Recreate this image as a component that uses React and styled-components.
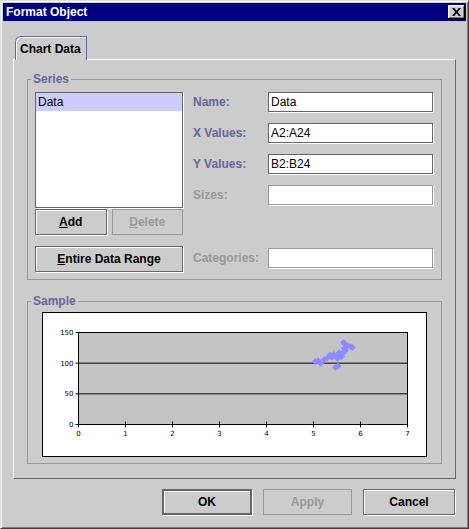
import React from "react";
import styled, { createGlobalStyle } from "styled-components";

const GlobalStyle = createGlobalStyle`
  html, body {
    margin: 0;
    padding: 0;
    background: #cccccc;
  }
  body {
    font-family: "Liberation Sans", Arial, sans-serif;
    font-size: 12px;
  }
  * {
    box-sizing: border-box;
  }
`;

const Window = styled.div`
  width: 469px;
  height: 529px;
  background: #cccccc;
  border: 1px solid;
  border-color: #dddddd #404040 #404040 #dddddd;
  box-shadow: inset 1px 1px #ffffff, inset -1px -1px #808080;
  padding: 2px;
  display: flex;
  flex-direction: column;
`;

const TitleBar = styled.div`
  height: 18px;
  flex: none;
  background: #000080;
  color: #ffffff;
  display: flex;
  align-items: center;
  justify-content: space-between;
  padding: 0 1px 0 3px;
  font-weight: bold;
  font-size: 12px;
`;

const CloseButton = styled.button`
  width: 17px;
  height: 14px;
  padding: 0;
  border: none;
  background: #cccccc;
  box-shadow: inset -1px -1px #000000, inset 1px 1px #ffffff,
    inset -2px -2px #808080, inset 2px 2px #dfdfdf;
  display: flex;
  align-items: center;
  justify-content: center;
`;

const Body = styled.div`
  flex: 1;
  padding: 15px 10px 0 10px;
  display: flex;
  flex-direction: column;
`;

const TabStrip = styled.div`
  display: flex;
  padding-left: 2px;
  height: 24px;
  margin-bottom: -1px;
  position: relative;
  z-index: 1;
`;

const Tab = styled.div`
  height: 24px;
  padding: 0 5px 0 4px;
  border: 1px solid #666699;
  border-bottom: none;
  border-top-left-radius: 6px;
  background: #cccccc;
  box-shadow: inset 1px 1px #ffffff;
  display: flex;
  align-items: center;
  font-weight: bold;
  color: #000000;
`;

const TabPanel = styled.div`
  height: 420px;
  flex: none;
  border: 1px solid;
  border-color: #ffffff #666666 #666666 #ffffff;
  padding: 12px 13px 0 13px;
  display: flex;
  flex-direction: column;
`;

const Group = styled.fieldset`
  margin: ${(p) => (p.$gap ? `${p.$gap}px` : "0")} 0 0 0;
  padding: ${(p) => p.$pad};
  border: 1px solid #999999;
  min-width: 0;
`;

const Legend = styled.legend`
  margin-left: -4px;
  padding: 0 2px;
  height: 14px;
  line-height: 14px;
  font-weight: bold;
  color: #666699;
`;

const SeriesLayout = styled.div`
  display: flex;
  gap: 10px;
`;

const LeftColumn = styled.div`
  width: 148px;
  display: flex;
  flex-direction: column;
`;

const List = styled.div`
  height: 116px;
  background: #ffffff;
  border: 1px solid #666666;
  box-shadow: 1px 1px #ffffff;
`;

const ListItem = styled.div`
  height: 18px;
  line-height: 18px;
  padding-left: 2px;
  background: ${(p) => (p.$selected ? "#ccccff" : "transparent")};
  color: #000000;
`;

const ButtonRow = styled.div`
  display: flex;
  gap: 5px;
  margin-top: 1px;
`;

const Button = styled.button`
  height: 26px;
  width: ${(p) => (p.$width ? `${p.$width}px` : "auto")};
  flex: ${(p) => (p.$grow ? 1 : "none")};
  margin-top: ${(p) => (p.$top ? `${p.$top}px` : "0")};
  padding: 0;
  background: #cccccc;
  font-family: "Liberation Sans", Arial, sans-serif;
  font-size: 12px;
  font-weight: bold;
  color: ${(p) => (p.disabled ? "#999999" : "#000000")};
  border: ${(p) => (p.$default ? "2px" : "1px")} solid
    ${(p) => (p.disabled ? "#999999" : "#666666")};
  box-shadow: ${(p) =>
    p.disabled ? "none" : "inset 1px 1px #ffffff, 1px 1px #ffffff"};
`;

const Mnemonic = styled.span`
  text-decoration: underline;
`;

const FieldColumn = styled.div`
  flex: 1;
  display: flex;
  flex-direction: column;
  gap: 11px;
`;

const FieldRow = styled.div`
  display: flex;
  align-items: center;
  height: 20px;
  margin-top: ${(p) => (p.$push ? "auto" : "0")};
  margin-bottom: ${(p) => (p.$push ? "4px" : "0")};
`;

const Label = styled.label`
  width: 75px;
  font-weight: bold;
  color: ${(p) => (p.$disabled ? "#999999" : "#666699")};
`;

const Field = styled.div`
  width: 165px;
  height: 20px;
  background: #ffffff;
  border: 1px solid ${(p) => (p.$disabled ? "#999999" : "#666666")};
  box-shadow: 1px 1px #ffffff;
  padding-left: 2px;
  line-height: 18px;
  color: #000000;
`;

const ChartBox = styled.div`
  width: 385px;
  height: 145px;
  margin-left: 7px;
  background: #ffffff;
  border: 1px solid #000000;
`;

const ButtonBar = styled.div`
  display: flex;
  justify-content: flex-end;
  gap: 11px;
  margin-top: 10px;
  padding-right: 1px;
`;

const X0 = 35.5;
const X1 = 364.5;
const Y0 = 19.5;
const Y1 = 111.5;
const px = (v) => X0 + (v / 7) * (X1 - X0);
const py = (v) => Y1 - (v / 150) * (Y1 - Y0);

const points = [
  [5.04, 102.7],
  [5.1, 104],
  [5.15, 99.5],
  [5.23, 106],
  [5.3, 109],
  [5.36, 111],
  [5.43, 114],
  [5.4, 110],
  [5.51, 107.6],
  [5.55, 117],
  [5.6, 111],
  [5.5, 113],
  [5.68, 120.6],
  [5.62, 116],
  [5.47, 93],
  [5.52, 95.5],
  [5.64, 133.7],
  [5.68, 130],
  [5.72, 128.8],
  [5.78, 127],
  [5.83, 125.5],
  [5.66, 124],
  [5.35, 113.5],
];

const Chart = () => (
  <svg width="383" height="143" viewBox="0 0 383 143">
    <rect
      x={X0}
      y={Y0}
      width={X1 - X0}
      height={Y1 - Y0}
      fill="#c4c4c4"
      stroke="#000"
    />
    {[50, 100].map((v) => (
      <line key={v} x1={X0} x2={X1} y1={py(v)} y2={py(v)} stroke="#000" />
    ))}
    {[0, 50, 100, 150].map((v) => (
      <g key={v}>
        <line x1={X0 - 3} x2={X0} y1={py(v)} y2={py(v)} stroke="#000" />
        <text
          x={X0 - 5}
          y={py(v) + 2.5}
          textAnchor="end"
          fontSize="7"
          fontFamily="DejaVu Sans, sans-serif"
        >
          {v}
        </text>
      </g>
    ))}
    {[0, 1, 2, 3, 4, 5, 6, 7].map((v) => (
      <g key={v}>
        <line x1={px(v)} x2={px(v)} y1={Y1 - 3} y2={Y1 + 3} stroke="#000" />
        <text
          x={px(v)}
          y={Y1 + 11}
          textAnchor="middle"
          fontSize="7"
          fontFamily="DejaVu Sans, sans-serif"
        >
          {v}
        </text>
      </g>
    ))}
    {points.map(([x, y], i) => {
      const cx = px(x);
      const cy = py(y);
      return (
        <path
          key={i}
          d={`M${cx} ${cy - 3.5}L${cx + 3.5} ${cy}L${cx} ${cy + 3.5}L${cx - 3.5} ${cy}Z`}
          fill="#8c8cff"
        />
      );
    })}
  </svg>
);

const App = () => {
  return (
    <>
      <GlobalStyle />
      <Window>
        <TitleBar>
          <span>Format Object</span>
          <CloseButton aria-label="Close">
            <svg width="9" height="8" viewBox="0 0 9 8">
              <path d="M0 0h2.2l2.3 2.8L6.8 0H9L5.6 4 9 8H6.8L4.5 5.2 2.2 8H0l3.4-4z" fill="#000" />
            </svg>
          </CloseButton>
        </TitleBar>
        <Body>
          <TabStrip>
            <Tab>Chart Data</Tab>
          </TabStrip>
          <TabPanel>
            <Group $pad="6px 8px 7px 7px">
              <Legend>Series</Legend>
              <SeriesLayout>
                <LeftColumn>
                  <List>
                    <ListItem $selected>Data</ListItem>
                  </List>
                  <ButtonRow>
                    <Button $grow>
                      <Mnemonic>A</Mnemonic>dd
                    </Button>
                    <Button $grow disabled>
                      <Mnemonic>D</Mnemonic>elete
                    </Button>
                  </ButtonRow>
                  <Button $top={11}>
                    <Mnemonic>E</Mnemonic>ntire Data Range
                  </Button>
                </LeftColumn>
                <FieldColumn>
                  <FieldRow>
                    <Label>Name:</Label>
                    <Field>Data</Field>
                  </FieldRow>
                  <FieldRow>
                    <Label>X Values:</Label>
                    <Field>A2:A24</Field>
                  </FieldRow>
                  <FieldRow>
                    <Label>Y Values:</Label>
                    <Field>B2:B24</Field>
                  </FieldRow>
                  <FieldRow>
                    <Label $disabled>Sizes:</Label>
                    <Field $disabled />
                  </FieldRow>
                  <FieldRow $push>
                    <Label $disabled>Categories:</Label>
                    <Field $disabled />
                  </FieldRow>
                </FieldColumn>
              </SeriesLayout>
            </Group>
            <Group $gap={14} $pad="4px 7px 6px 7px">
              <Legend>Sample</Legend>
              <ChartBox>
                <Chart />
              </ChartBox>
            </Group>
          </TabPanel>
          <ButtonBar>
            <Button $width={90} $default>
              OK
            </Button>
            <Button $width={89} disabled>
              Apply
            </Button>
            <Button $width={92}>Cancel</Button>
          </ButtonBar>
        </Body>
      </Window>
    </>
  );
};

export default App;
